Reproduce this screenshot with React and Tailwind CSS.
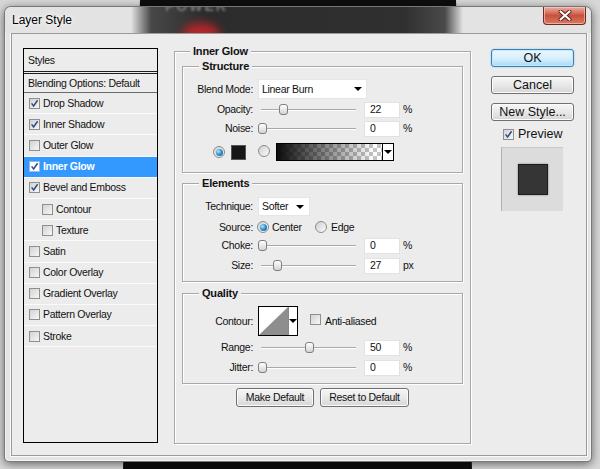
import React from "react";

function Check({ checked, sel }) {
  return (
    <span
      className={
        sel
          ? "relative inline-block shrink-0 w-[11px] h-[11px] border border-[#9fb8d8] bg-white"
          : "relative inline-block shrink-0 w-[11px] h-[11px] border border-[#8e8f8f] bg-linear-to-br from-[#d2d2d2] to-[#f7f7f7]"
      }
    >
      {checked && (
        <svg className="absolute left-0 top-0" width="9" height="9" viewBox="0 0 9 9">
          <path d="M1.6 4.4 L3.6 7 L7.6 1.2" stroke="#34497e" strokeWidth="1.5" fill="none" />
        </svg>
      )}
    </span>
  );
}

function Radio({ checked }) {
  return (
    <span className="relative inline-flex items-center justify-center shrink-0 w-[12px] h-[12px] rounded-full border border-[#8c8c8c] bg-linear-to-br from-[#cfcfcf] to-[#fbfbfb]">
      {checked && (
        <span className="w-[7px] h-[7px] rounded-full bg-[radial-gradient(circle_at_35%_35%,#a8e4ff,#2287c9_55%,#0c4d84)]" />
      )}
    </span>
  );
}

function Arrow() {
  return <span className="w-0 h-0 border-l-[4px] border-r-[4px] border-t-[4px] border-l-transparent border-r-transparent border-t-black" />;
}

function Slider({ pos }) {
  return (
    <div className="relative w-[101px] h-full">
      <div className="absolute left-[3px] right-[3px] top-1/2 -mt-[1px] h-[2px] border-t border-t-[#a9a9a9] border-b border-b-white" />
      <div
        className="absolute top-1/2 -mt-[6px] w-[9px] h-[11px] rounded-[3px] border border-[#7f7f7f] bg-linear-to-b from-white to-[#d4d4d4]"
        style={{ left: pos }}
      />
    </div>
  );
}

function Num({ v }) {
  return (
    <div className="w-[36px] h-[16px] bg-white border border-[#e2e2e2] pl-[5px] flex items-center">{v}</div>
  );
}

function Label({ children }) {
  return <div className="w-[70px] shrink-0 text-right">{children}</div>;
}

function SliderRow({ label, pos, value, unit, mt }) {
  return (
    <div className={mt + " h-[17px] flex items-center"}>
      <Label>{label}</Label>
      <div className="ml-[5px] h-full">
        <Slider pos={pos} />
      </div>
      <div className="ml-[5px]">
        <Num v={value} />
      </div>
      <div className="ml-[3px]">{unit}</div>
    </div>
  );
}

function Group({ title, className, titleLeft, children }) {
  return (
    <div className={"relative border border-[#a8a8a8] shadow-[inset_1px_1px_0_#ffffff,1px_1px_0_#ffffff] " + className}>
      <span className={"absolute -top-[7px] px-[3px] bg-[#ececec] font-bold text-[11px] tracking-[-0.2px] leading-[13px] " + titleLeft}>
        {title}
      </span>
      {children}
    </div>
  );
}

function Btn({ children, className }) {
  return (
    <div
      className={
        "flex items-center justify-center rounded-[3px] border border-[#707070] bg-linear-to-b from-[#f6f6f6] via-[#e9e9e9] to-[#d6d6d6] shadow-[inset_0_0_0_1px_#fbfbfb] " +
        className
      }
    >
      {children}
    </div>
  );
}

const items = [
  { t: "Drop Shadow", c: true },
  { t: "Inner Shadow", c: true },
  { t: "Outer Glow", c: false },
  { t: "Inner Glow", c: true, sel: true },
  { t: "Bevel and Emboss", c: true },
  { t: "Contour", c: false, ind: true },
  { t: "Texture", c: false, ind: true },
  { t: "Satin", c: false },
  { t: "Color Overlay", c: false },
  { t: "Gradient Overlay", c: false },
  { t: "Pattern Overlay", c: false },
  { t: "Stroke", c: false },
];

export default function App() {
  return (
    <div className="relative w-[600px] h-[469px] overflow-hidden bg-[#d8d8d8] font-['Liberation_Sans',Arial,sans-serif] text-[10.5px] tracking-[-0.3px] leading-[13px] text-[#111]">
      {/* backdrop picture */}
      <svg className="absolute left-0 top-0" width="600" height="469">
        <polygon points="140,0 456,0 472,469 123,469" fill="#0e0e0e" />
      </svg>

      {/* window */}
      <div className="absolute left-[4px] top-[6px] w-[588px] h-[456px] rounded-t-[7px] rounded-b-[5px] border border-[#4a4a4a]/70 bg-[#e4e4e4] shadow-[0_2px_10px_rgba(0,0,0,0.55),inset_0_0_0_1px_rgba(255,255,255,0.6)] flex flex-col">
        {/* title bar (glass showing the dark object behind) */}
        <div className="relative h-[26px] shrink-0 flex items-center pl-[7px] rounded-t-[6px] overflow-hidden bg-[linear-gradient(to_right,#e3e3e3_0px,#e3e3e3_126px,#484848_146px,#2c2c2c_200px,#303030_400px,#4a4a4a_440px,#e3e3e3_458px,#e3e3e3_100%)]">
          <div className="absolute left-[176px] top-[16px] w-[40px] h-[34px] rounded-full bg-[#b5262b] blur-[5px]" />
          <span className="absolute left-[160px] -top-[9px] text-[14px] leading-[16px] font-bold tracking-[2px] text-[#7a7a7a] blur-[1px]">POWER</span>
          <span className="relative text-[12px] tracking-normal text-black [text-shadow:0_0_6px_#ffffff,0_0_3px_#ffffff]">Layer Style</span>
          <div className="absolute top-0 right-[5px] w-[43px] h-[18px] rounded-b-[4px] border border-t-0 border-[#6e2a22] bg-linear-to-b from-[#eab0a5] via-[#c9503b] to-[#d77a63] shadow-[inset_0_0_0_1px_rgba(255,210,200,0.6)] flex items-center justify-center">
            <svg width="14" height="11" viewBox="0 0 14 11">
              <path d="M2.5 1.5 L11.5 9.5 M11.5 1.5 L2.5 9.5" stroke="#5a1d16" strokeWidth="4" strokeLinecap="round" />
              <path d="M2.5 1.5 L11.5 9.5 M11.5 1.5 L2.5 9.5" stroke="#ffffff" strokeWidth="2.2" strokeLinecap="round" />
            </svg>
          </div>
        </div>

        {/* content */}
        <div className="flex-1 ml-[6px] mr-[4px] mb-[5px] border border-[#9b9b9b] bg-[#ececec] shadow-[0_0_0_1px_rgba(255,255,255,0.8)] flex items-start">
          {/* styles list */}
          <div className="ml-[11px] mt-[14px] w-[135px] h-[395px] border border-black flex flex-col">
            <div className="h-[25px] shrink-0 pl-[4px] flex items-center border-b-[3px] border-double border-b-[#1e1e1e]">Styles</div>
            <div className="h-[19px] shrink-0 pl-[4px] flex items-center border-b border-b-[#6a6a6a]">Blending Options: Default</div>
            {items.map((it) => (
              <div
                key={it.t}
                className={
                  (it.sel ? "bg-[#3399ff] text-white font-bold " : "") +
                  (it.ind ? "pl-[18px] " : "pl-[5px] ") +
                  "h-[21.2px] shrink-0 flex items-center border-b border-b-[#fafafa]"
                }
              >
                <Check checked={it.c} sel={it.sel} />
                <span className="ml-[3px]">{it.t}</span>
              </div>
            ))}
          </div>

          {/* Inner Glow group */}
          <Group title="Inner Glow" titleLeft="left-[15px]" className="ml-[16px] mt-[17px] w-[297px] h-[393px] px-[7px] pt-[14px] flex flex-col">
            <Group title="Structure" titleLeft="left-[16px]" className="h-[107px] shrink-0 pt-[12px]">
              <div className="h-[20px] flex items-center">
                <Label>Blend Mode:</Label>
                <div className="ml-[5px] w-[109px] h-[20px] bg-white border border-[#e6e6e6] flex items-center justify-between pl-[3px] pr-[4px]">
                  <span>Linear Burn</span>
                  <Arrow />
                </div>
              </div>
              <SliderRow label="Opacity:" pos={21} value="22" unit="%" mt="mt-[2px]" />
              <SliderRow label="Noise:" pos={0} value="0" unit="%" mt="mt-[2px]" />
              <div className="mt-[6px] h-[18px] flex items-center pl-[30px]">
                <Radio checked />
                <div className="ml-[6px] w-[15px] h-[15px] bg-[#161616] border border-[#555]" />
                <div className="ml-[12px]">
                  <Radio />
                </div>
                <div className="ml-[6px] w-[118px] h-[18px] border border-black flex">
                  <div className="flex-1 [background:linear-gradient(to_right,#0c0c0c,rgba(255,255,255,0)_92%),repeating-conic-gradient(#c4c4c4_0_25%,#ffffff_0_50%)_0_0/8px_8px]" />
                  <div className="w-[11px] border-l border-l-black bg-white flex items-center justify-center">
                    <Arrow />
                  </div>
                </div>
              </div>
            </Group>

            <Group title="Elements" titleLeft="left-[16px]" className="mt-[10px] h-[99px] shrink-0 pt-[13px]">
              <div className="h-[19px] flex items-center">
                <Label>Technique:</Label>
                <div className="ml-[5px] w-[52px] h-[19px] bg-white border border-[#e6e6e6] flex items-center justify-between pl-[3px] pr-[5px]">
                  <span>Softer</span>
                  <Arrow />
                </div>
              </div>
              <div className="mt-[3px] h-[16px] flex items-center">
                <Label>Source:</Label>
                <div className="ml-[4px]">
                  <Radio checked />
                </div>
                <span className="ml-[3px] w-[43px]">Center</span>
                <Radio />
                <span className="ml-[4px]">Edge</span>
              </div>
              <SliderRow label="Choke:" pos={0} value="0" unit="%" mt="mt-[2px]" />
              <SliderRow label="Size:" pos={15} value="27" unit="px" mt="mt-[3px]" />
            </Group>

            <Group title="Quality" titleLeft="left-[16px]" className="mt-[11px] h-[91px] shrink-0 pt-[12px]">
              <div className="h-[30px] flex items-center">
                <Label>Contour:</Label>
                <div className="ml-[5px] w-[40px] h-[30px] border border-black bg-white flex">
                  <svg width="29" height="28" viewBox="0 0 29 28" className="shrink-0">
                    <polygon points="0,28 29,0 29,28" fill="#8e8e8e" />
                  </svg>
                  <div className="flex-1 border-l border-l-[#888] flex items-center justify-center">
                    <Arrow />
                  </div>
                </div>
                <div className="ml-[12px]">
                  <Check checked={false} />
                </div>
                <span className="ml-[4px]">Anti-aliased</span>
              </div>
              <SliderRow label="Range:" pos={47} value="50" unit="%" mt="mt-[3px]" />
              <SliderRow label="Jitter:" pos={0} value="0" unit="%" mt="mt-[3px]" />
            </Group>

            <div className="mt-[4px] h-[19px] flex justify-center gap-[6px]">
              <Btn className="w-[78px] h-[19px]">Make Default</Btn>
              <Btn className="w-[89px] h-[19px]">Reset to Default</Btn>
            </div>
          </Group>

          {/* right column */}
          <div className="ml-[20px] mt-[15px] w-[83px] flex flex-col text-[12.5px] tracking-normal">
            <div className="h-[18px] flex items-center justify-center rounded-[3px] border border-[#3c7fb1] bg-linear-to-b from-[#eaf6fd] via-[#d9f0fc] to-[#a7d9f5] shadow-[inset_0_0_0_1px_#c5eafd,0_0_2px_#7fc8f0]">
              OK
            </div>
            <Btn className="mt-[9px] h-[18px]">Cancel</Btn>
            <Btn className="mt-[9px] h-[18px]">New Style...</Btn>
            <div className="mt-[7px] h-[13px] pl-[12px] flex items-center">
              <Check checked />
              <span className="ml-[4px]">Preview</span>
            </div>
            <div className="ml-[10px] mt-[6px] w-[62px] h-[64px] bg-[#dcdcdc] border-l border-t border-l-[#b0b0b0] border-t-[#c8c8c8] flex items-center justify-center">
              <div className="w-[30px] h-[31px] bg-[#353535] border border-[#1c1c1c] shadow-[0_0_2px_rgba(0,0,0,0.4)]" />
            </div>
          </div>
        </div>
      </div>
    </div>
  );
}
